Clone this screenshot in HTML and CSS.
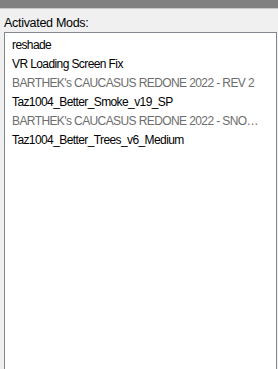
FILE: index.html
```html
<!DOCTYPE html>
<html lang="en">
<head>
    <meta charset="UTF-8">
    <meta name="viewport" content="width=device-width, initial-scale=1.0">
    <title>Activated Mods</title>
    <link rel="stylesheet" href="styles.css">
</head>
<body>
<div class="title-strip"></div>

<div class="panel">
    <label class="list-label" for="modList">Activated Mods:</label>
    <ul class="mod-list" id="modList">
        <li>reshade</li>
        <li>VR Loading Screen Fix</li>
        <li class="disabled">BARTHEK's CAUCASUS REDONE 2022 - REV 2</li>
        <li>Taz1004_Better_Smoke_v19_SP</li>
        <li class="disabled">BARTHEK's CAUCASUS REDONE 2022 - SNOWLESS EDITION</li>
        <li>Taz1004_Better_Trees_v6_Medium</li>
    </ul>
</div>
</body>
</html>
```

FILE: styles.css
```css
html, body {
    margin: 0;
    padding: 0;
    height: 100%;
    overflow: hidden;
    font-family: "Liberation Sans", Arial, sans-serif;
    background-color: #f0f0f0;
}

body {
    display: flex;
    flex-direction: column;
}

.title-strip {
    height: 8px;
    background-color: #808080;
    border-bottom: 1px solid #c8c8c8;
}

.panel {
    flex: 1;
    display: flex;
    flex-direction: column;
    min-height: 0;
    padding: 6px 1px 0 4px;
}

.list-label {
    display: block;
    font-size: 12.5px;
    line-height: 17px;
    letter-spacing: -0.3px;
    color: #000;
}

.mod-list {
    flex: 1;
    list-style: none;
    margin: 0;
    padding: 3px 0 0 0;
    background-color: #fff;
    border: 1px solid #828790;
    border-bottom: none;
}

.mod-list li {
    font-size: 12px;
    line-height: 19px;
    letter-spacing: -0.6px;
    padding: 0 8px 0 7px;
    color: #000;
    white-space: nowrap;
    overflow: hidden;
    text-overflow: ellipsis;
}

.mod-list li.disabled {
    color: #6d6d6d;
}
```
